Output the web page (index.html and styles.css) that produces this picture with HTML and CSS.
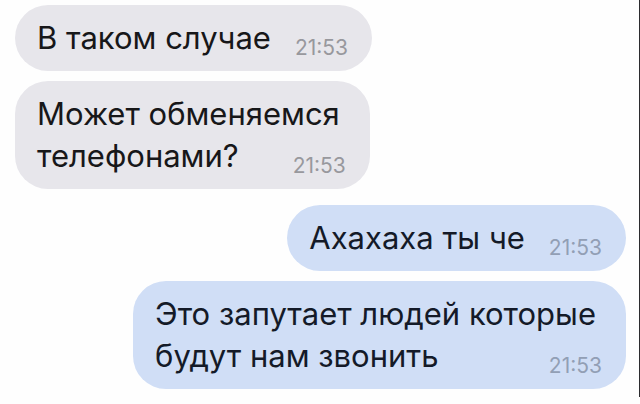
FILE: index.html
```
<!DOCTYPE html>
<html lang="ru">
<head>
<meta charset="utf-8">
<title>Чат</title>
<link rel="stylesheet" href="styles.css">
</head>
<body>
<main class="chat">
  <section class="group incoming">
    <article class="bubble">
      <div class="last"><span class="text">В таком случае</span><time class="time">21:53</time></div>
    </article>
    <article class="bubble">
      <div class="text">Может обменяемся</div>
      <div class="last"><span class="text">телефонами?</span><time class="time">21:53</time></div>
    </article>
  </section>
  <section class="group outgoing">
    <article class="bubble">
      <div class="last"><span class="text">Ахахаха ты че</span><time class="time">21:53</time></div>
    </article>
    <article class="bubble">
      <div class="text">Это запутает людей которые</div>
      <div class="last"><span class="text">будут нам звонить</span><time class="time">21:53</time></div>
    </article>
  </section>
</main>
</body>
</html>
```
FILE: styles.css
```
* {
  box-sizing: border-box;
}

body {
  margin: 0;
  background: #fefefe;
  font-family: Inter, "Liberation Sans", sans-serif;
}

.chat {
  display: flex;
  flex-direction: column;
  gap: 16px;
  padding: 5px 13px 8px 15px;
  border-right: 1px solid #2b2b2e;
}

.group {
  display: flex;
  flex-direction: column;
  gap: 10px;
}

.incoming {
  align-items: flex-start;
  color: #171719;
}

.outgoing {
  align-items: flex-end;
  color: #141a28;
}

.bubble {
  padding: 12px 24px 12px 22px;
  border-radius: 33px;
}

.incoming .bubble {
  background: #e7e6eb;
}

.outgoing .bubble {
  background: #d0def6;
}

.text {
  padding-right: 6px;
  font-size: 31px;
  line-height: 42px;
  white-space: nowrap;
}

.last {
  display: flex;
  align-items: flex-end;
  justify-content: space-between;
  gap: 18px;
}

.time {
  font-size: 21px;
  line-height: 22px;
}

.incoming .time {
  color: #98989d;
}

.outgoing .time {
  color: #929fb5;
}
```
